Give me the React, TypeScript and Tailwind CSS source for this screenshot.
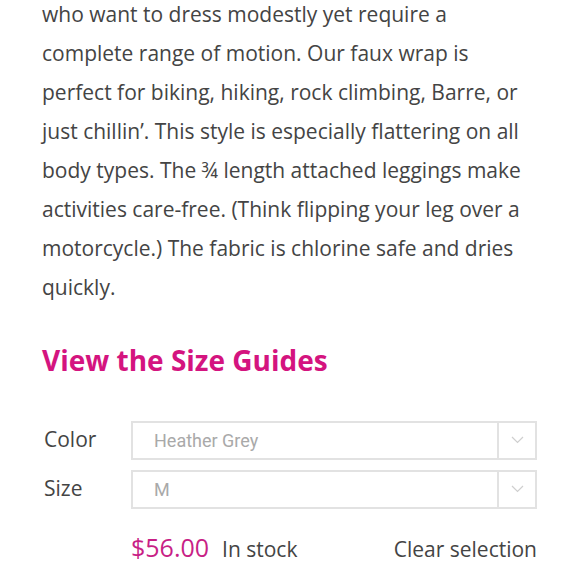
import React from "react";

const lines = [
  "who want to dress modestly yet require a",
  "complete range of motion. Our faux wrap is",
  "perfect for biking, hiking, rock climbing, Barre, or",
  "just chillin’. This style is especially flattering on all",
  "body types. The ¾ length attached leggings make",
  "activities care-free. (Think flipping your leg over a",
  "motorcycle.) The fabric is chlorine safe and dries",
  "quickly.",
];

function Chevron() {
  return (
    <svg width="13" height="8" viewBox="0 0 13 8" fill="none">
      <polyline points="1,1 6.5,6.5 12,1" stroke="#cfcfcf" strokeWidth="1.2" />
    </svg>
  );
}

function SelectRow({ label, value }: { label: string; value: string }) {
  return (
    <div className="flex items-center">
      <span className="w-[89px] pl-[2px] text-[21px] text-[#444]">{label}</span>
      <div className="flex h-[39px] flex-1 border-2 border-[#e2e2e2]">
        <div className="flex flex-1 items-center pl-[21px] font-['Roboto',sans-serif] text-[18px] text-[#a9a9a9]">
          {value}
        </div>
        <div className="flex w-[38px] items-center justify-center border-l-2 border-[#e2e2e2]">
          <Chevron />
        </div>
      </div>
    </div>
  );
}

export default function App() {
  return (
    <div className="h-[579px] w-[580px] overflow-hidden bg-white pl-[42px] pr-[43px] font-['Open_Sans',sans-serif]">
      <p className="-mt-[5px] text-[21px] leading-[39px] text-[#444]">
        {lines.map((l, i) => (
          <span key={i} className="block whitespace-nowrap">
            {l}
          </span>
        ))}
      </p>

      <h2 className="mt-[37px] text-[28px] font-bold leading-[1.2] text-[#d4147f]">
        View the Size Guides
      </h2>

      <div className="mt-[43px] flex flex-col gap-[10px]">
        <SelectRow label="Color" value="Heather Grey" />
        <SelectRow label="Size" value="M" />
      </div>

      <div className="mt-[20px] flex items-baseline pl-[89px] text-[21px] text-[#444]">
        <span className="text-[25px] text-[#c81f86]">$56.00</span>
        <span className="ml-[13px]">In stock</span>
        <span className="ml-auto">Clear selection</span>
      </div>
    </div>
  );
}
